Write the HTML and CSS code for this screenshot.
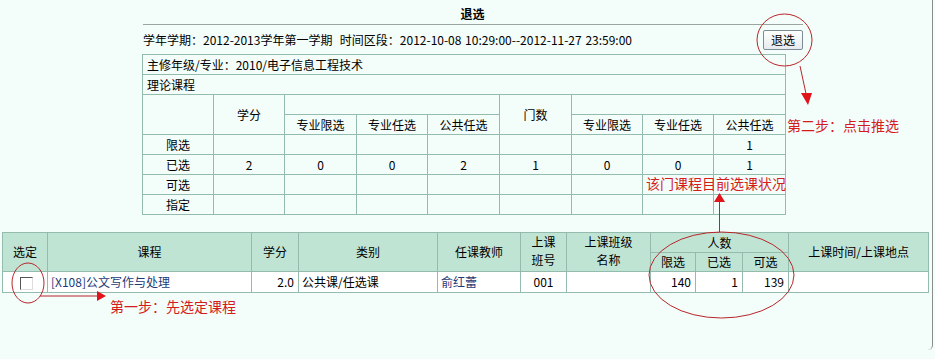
FILE: index.html
```html
<!DOCTYPE html>
<html lang="zh">
<head>
<meta charset="utf-8">
<title>退选</title>
<link rel="stylesheet" href="styles.css">
</head>
<body>
<div class="frame">
  <div class="top">
    <div class="title">退选</div>
    <div class="rule"></div>
    <div class="bar">
      <span class="info">学年学期：2012-2013学年第一学期&nbsp;&nbsp;时间区段：2012-10-08 10:29:00--2012-11-27 23:59:00</span>
      <button class="btn" type="button">退选</button>
    </div>
    <table class="stats">
      <colgroup>
        <col class="c71"><col class="c71"><col class="c72"><col class="c71"><col class="c72"><col class="c72"><col class="c71"><col class="c71"><col class="c72">
      </colgroup>
      <tr><td colspan="9" class="l">主修年级/专业：2010/电子信息工程技术</td></tr>
      <tr><td colspan="9" class="l">理论课程</td></tr>
      <tr><td rowspan="2"></td><td rowspan="2" class="hd">学分</td><td colspan="3"></td><td rowspan="2" class="hd">门数</td><td colspan="3"></td></tr>
      <tr><td>专业限选</td><td>专业任选</td><td>公共任选</td><td>专业限选</td><td>专业任选</td><td>公共任选</td></tr>
      <tr><td>限选</td><td></td><td></td><td></td><td></td><td></td><td></td><td></td><td>1</td></tr>
      <tr><td>已选</td><td>2</td><td>0</td><td>0</td><td>2</td><td>1</td><td>0</td><td>0</td><td>1</td></tr>
      <tr><td>可选</td><td></td><td></td><td></td><td></td><td></td><td></td><td></td><td></td></tr>
      <tr><td>指定</td><td></td><td></td><td></td><td></td><td></td><td></td><td></td><td></td></tr>
    </table>
  </div>

  <table class="courses">
    <colgroup>
      <col class="w45"><col class="w204"><col class="w47"><col class="w139"><col class="w83"><col class="w46"><col class="w84"><col class="w45"><col class="w47"><col class="w46"><col class="w140">
    </colgroup>
    <tr class="h1">
      <th rowspan="2">选定</th>
      <th rowspan="2">课程</th>
      <th rowspan="2">学分</th>
      <th rowspan="2">类别</th>
      <th rowspan="2">任课教师</th>
      <th rowspan="2" class="two"><span class="ln">上课</span><span class="ln">班号</span></th>
      <th rowspan="2" class="two"><span class="ln">上课班级</span><span class="ln">名称</span></th>
      <th colspan="3">人数</th>
      <th rowspan="2">上课时间/上课地点</th>
    </tr>
    <tr class="h2">
      <th>限选</th><th>已选</th><th>可选</th>
    </tr>
    <tr class="data">
      <td class="c"><span class="chk"></span></td>
      <td class="l"><a class="lnk">[X108]公文写作与处理</a></td>
      <td class="r">2.0</td>
      <td class="l">公共课/任选课</td>
      <td class="l"><a class="lnk">俞红蕾</a></td>
      <td class="c">001</td>
      <td></td>
      <td class="r">140</td>
      <td class="r">1</td>
      <td class="r">139</td>
      <td></td>
    </tr>
  </table>

  <svg class="anno" width="935" height="359" viewBox="0 0 935 359">
    <g fill="none" stroke="#b8262a" stroke-width="1">
      <ellipse cx="784.5" cy="40" rx="27.5" ry="26"/>
      <line x1="800" y1="66" x2="806.5" y2="96"/>
      <ellipse cx="28" cy="283" rx="16" ry="20"/>
      <line x1="40" y1="296" x2="98" y2="296"/>
      <ellipse cx="721.5" cy="275" rx="72.5" ry="43"/>
      <line x1="719.5" y1="201" x2="719.5" y2="232"/>
    </g>
    <g fill="#e0141a">
      <polygon points="801,93 812,93 808,105"/>
      <polygon points="97,291 106,296 97,301"/>
      <polygon points="714,202 725,202 719.5,193"/>
    </g>
  </svg>
  <div class="note n2">第二步：点击推选</div>
  <div class="note n3">该门课程目前选课状况</div>
  <div class="note n1">第一步：先选定课程</div>
</div>
</body>
</html>
```

FILE: styles.css
```css
html, body {
  margin: 0;
  padding: 0;
}
body {
  background: #f3fdf9;
  font-family: "Noto Sans CJK SC", "Liberation Sans", sans-serif;
  font-size: 12px;
  color: #000;
}
.frame {
  position: relative;
  width: 932px;
  height: 350px;
  border-right: 1px solid #8c8c8c;
  border-bottom-right-radius: 5px;
}
.top {
  margin-left: 142px;
  width: 661px;
  padding-top: 4px;
}
.title {
  text-align: center;
  font-weight: bold;
  height: 20px;
  line-height: 20px;
}
.rule {
  height: 0;
  border-top: 1px solid #9aa5a1;
  margin-left: 1px;
}
.bar {
  display: flex;
  justify-content: space-between;
  align-items: center;
  height: 29px;
}
.info {
  padding-left: 1px;
  line-height: 16px;
  word-spacing: 1px;
}
.btn {
  width: 40px;
  height: 20px;
  padding: 0;
  font-family: "Noto Sans CJK SC", sans-serif;
  font-size: 12px;
  line-height: 16px;
  color: #000;
  border: 1px solid #7d8b98;
  border-radius: 2px;
  background: linear-gradient(#ffffff, #e6eaee);
}
.stats {
  border-collapse: collapse;
  width: 644px;
  table-layout: fixed;
}
.c71 { width: 71px; }
.c72 { width: 72px; }
.stats td {
  border: 1px solid #93bcae;
  height: 19px;
  padding: 0;
  line-height: 16px;
  text-align: center;
  vertical-align: middle;
}
.stats td.l {
  text-align: left;
  padding-left: 4px;
}
.stats td.hd {
  vertical-align: middle;
}
.courses {
  margin: 17px 0 0 2px;
  border-collapse: collapse;
  width: 926px;
  table-layout: fixed;
}
.w45 { width: 45px; }
.w204 { width: 204px; }
.w47 { width: 47px; }
.w139 { width: 139px; }
.w83 { width: 83px; }
.w46 { width: 46px; }
.w84 { width: 84px; }
.w140 { width: 140px; }
.courses th, .courses td {
  border: 1px solid #93bcae;
  padding: 0;
  font-weight: normal;
  line-height: 16px;
}
.courses th {
  background: #c0e4d4;
  text-align: center;
  vertical-align: middle;
}
.courses .h1 th { height: 19px; }
.courses .h2 th { height: 18px; }
.courses th.two {
  vertical-align: top;
  padding-top: 0;
}
.courses th.two .ln {
  display: block;
  height: 18px;
  line-height: 18px;
}
.courses .data td {
  background: #ffffff;
  height: 20px;
  vertical-align: middle;
}
.courses td.l { text-align: left; padding-left: 3px; }
.courses td.r { text-align: right; padding-right: 4px; }
.courses td.c { text-align: center; }
.lnk {
  color: #1c3a78;
  text-decoration: none;
}
.chk {
  display: inline-block;
  width: 11px;
  height: 11px;
  border: 1px solid #555;
  border-right-color: #ddd;
  border-bottom-color: #ddd;
  background: #fff;
  vertical-align: middle;
  margin-left: 2px;
}
.anno {
  position: absolute;
  left: 0;
  top: 0;
  pointer-events: none;
}
.note {
  position: absolute;
  font-size: 14px;
  line-height: 14px;
  color: #d41c1c;
  white-space: nowrap;
}
.n2 { left: 787px; top: 118px; }
.n3 { left: 646px; top: 176px; }
.n1 { left: 110px; top: 299px; }
```
